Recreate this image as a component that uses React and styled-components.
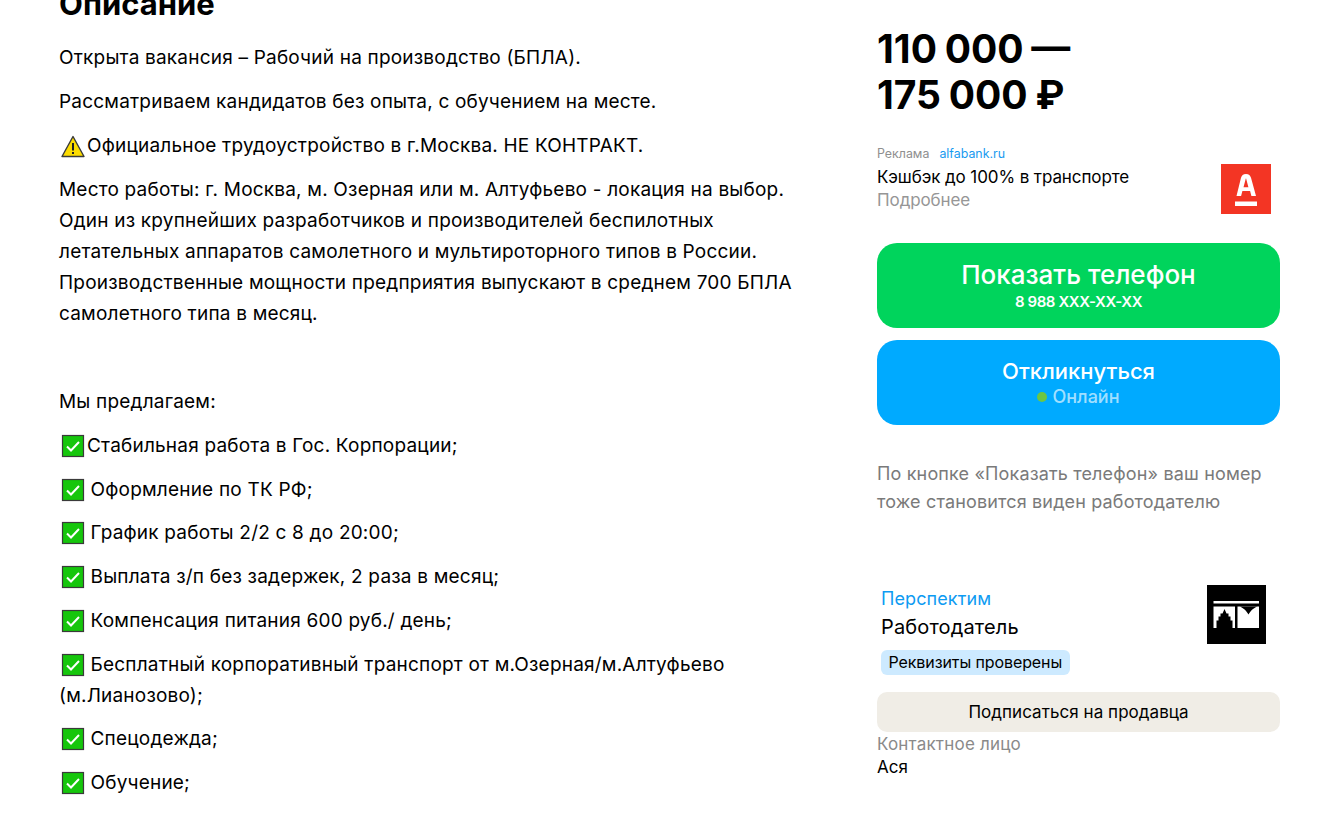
import React from "react";
import styled, { createGlobalStyle } from "styled-components";

const Global = createGlobalStyle`
  html, body { margin: 0; padding: 0; background: #fff; height: 836px; overflow: hidden; }
  body { font-family: Inter, "Noto Sans", "Liberation Sans", sans-serif; color: #000; }
`;

const Page = styled.div`
  display: flex;
  align-items: flex-start;
  margin-top: -14px;
  padding-left: 59px;
  gap: 58px;
`;

const Main = styled.main`
  width: 760px;
  flex: none;
`;

const Heading = styled.h2`
  margin: 0 0 20px;
  font-size: 31px;
  line-height: 36px;
  font-weight: 700;
`;

const Para = styled.p`
  margin: 0 0 ${(p) => p.$after ?? 12.75}px;
  font-size: 19px;
  line-height: 31px;
  letter-spacing: 0.2px;
  white-space: nowrap;
`;

const EmojiBox = styled.svg`
  display: inline-block;
  width: 24px;
  height: 24px;
  vertical-align: -6px;
  margin-left: 2px;
  margin-right: ${(p) => p.$gap}px;
`;

const Check = ({ gap = 0 }) => (
  <EmojiBox $gap={gap} viewBox="0 0 24 24">
    <rect x="1.5" y="1.5" width="21" height="21" fill="#16c60c" stroke="#3a3a3a" strokeWidth="1.2" />
    <path d="M6 12.5l4 4 8-8.5" fill="none" stroke="#fff" strokeWidth="2" />
  </EmojiBox>
);

const Warning = () => (
  <EmojiBox $gap={2} viewBox="0 0 24 24">
    <path d="M12 2.5L23 22.5H1Z" fill="#fcdc00" stroke="#3a3a3a" strokeWidth="1.4" strokeLinejoin="round" />
    <path d="M12 9v7.5" stroke="#222" strokeWidth="2" />
    <rect x="11" y="18" width="2" height="2" fill="#222" />
  </EmojiBox>
);

const Side = styled.aside`
  width: 403px;
  flex: none;
  padding-top: 40px;
`;

const Price = styled.div`
  font-size: 39px;
  line-height: 46px;
  font-weight: 700;
  word-spacing: -1.5px;
  margin-bottom: 28px;
`;

const Ad = styled.div`
  display: flex;
  justify-content: space-between;
  align-items: flex-start;
  padding-right: 9px;
  margin-bottom: 29px;
`;

const AdLabel = styled.div`
  font-size: 12.4px;
  line-height: 16px;
  color: #8f8f8f;
  margin-bottom: 4px;
`;

const AdLink = styled.span`
  color: #1a9bf0;
  margin-left: 10px;
`;

const AdTitle = styled.div`
  font-size: 17px;
  line-height: 23px;
  letter-spacing: -0.1px;
`;

const AdMore = styled(AdTitle)`
  color: #969696;
`;

const AdLogo = styled.svg`
  width: 50px;
  height: 50px;
  display: block;
  margin-top: 18px;
`;

const ActionButton = styled.button`
  display: flex;
  flex-direction: column;
  align-items: center;
  justify-content: center;
  width: 100%;
  height: 85px;
  border: 0;
  padding: 0;
  margin-bottom: 12px;
  border-radius: 20px;
  background: ${(p) => p.$bg};
  color: #fff;
  font-family: inherit;
`;

const ActionTitle = styled.span`
  font-size: ${(p) => p.$size}px;
  line-height: 30px;
  font-weight: 500;
`;

const ActionSub = styled.span`
  margin-top: 2px;
  font-size: 15px;
  line-height: 20px;
  font-weight: 600;
  letter-spacing: -0.4px;
`;

const Online = styled.span`
  display: flex;
  align-items: center;
  gap: 5px;
  padding-bottom: 2px;
  font-size: 18px;
  line-height: 22px;
  font-weight: 500;
  color: rgba(255, 255, 255, 0.65);
`;

const Dot = styled.i`
  width: 10px;
  height: 10px;
  border-radius: 50%;
  background: #6cc644;
`;

const Note = styled.p`
  margin: 35px 0 69px;
  font-size: 18px;
  line-height: 28px;
  letter-spacing: 0.15px;
  color: #7a7a7a;
`;

const Seller = styled.div`
  display: flex;
  justify-content: space-between;
  align-items: flex-start;
  padding: 0 14px 0 4px;
`;

const SellerName = styled.div`
  font-size: 18px;
  line-height: 28px;
  color: #0d9bf2;
  letter-spacing: 0.1px;
`;

const SellerRole = styled.div`
  font-size: 20px;
  line-height: 28px;
  letter-spacing: 0.15px;
`;

const Badge = styled.span`
  display: inline-block;
  margin-top: 9px;
  padding: 0 7.5px;
  font-size: 16px;
  line-height: 25px;
  background: #cdeaff;
  border-radius: 6px;
  letter-spacing: -0.1px;
`;

const SellerLogo = styled.svg`
  width: 59px;
  height: 59px;
  display: block;
`;

const Subscribe = styled.button`
  display: block;
  width: 100%;
  height: 40px;
  margin: 17px 0 0;
  border: 0;
  border-radius: 10px;
  background: #f0ede6;
  color: #000;
  font-family: inherit;
  font-size: 17px;
  letter-spacing: 0.05px;
`;

const ContactLabel = styled.div`
  font-size: 17px;
  line-height: 23px;
  letter-spacing: 0.2px;
  color: #8a8a8a;
  margin-top: 1px;
`;

const ContactName = styled.div`
  font-size: 17px;
  line-height: 23px;
`;

export default function App() {
  return (
    <>
      <Global />
      <Page>
        <Main>
          <Heading>Описание</Heading>
          <Para>Открыта вакансия – Рабочий на производство (БПЛА).</Para>
          <Para>Рассматриваем кандидатов без опыта, с обучением на месте.</Para>
          <Para $after={13.75}><Warning />Официальное трудоустройство в г.Москва. НЕ КОНТРАКТ.</Para>
          <Para>
            Место работы: г. Москва, м. Озерная или м. Алтуфьево - локация на выбор.<br />
            Один из крупнейших разработчиков и производителей беспилотных<br />
            летательных аппаратов самолетного и мультироторного типов в России.<br />
            Производственные мощности предприятия выпускают в среднем 700 БПЛА<br />
            самолетного типа в месяц.
          </Para>
          <Para $after={13}><br /></Para>
          <Para>Мы предлагаем:</Para>
          <Para><Check gap={2} />Стабильная работа в Гос. Корпорации;</Para>
          <Para><Check /> Оформление по ТК РФ;</Para>
          <Para><Check /> График работы 2/2 с 8 до 20:00;</Para>
          <Para><Check /> Выплата з/п без задержек, 2 раза в месяц;</Para>
          <Para><Check /> Компенсация питания 600 руб./ день;</Para>
          <Para><Check /> Бесплатный корпоративный транспорт от м.Озерная/м.Алтуфьево<br />(м.Лианозово);</Para>
          <Para><Check /> Спецодежда;</Para>
          <Para><Check /> Обучение;</Para>
        </Main>
        <Side>
          <Price>110 000 —<br />175 000 ₽</Price>
          <Ad>
            <div>
              <AdLabel>Реклама<AdLink>alfabank.ru</AdLink></AdLabel>
              <AdTitle>Кэшбэк до 100% в транспорте</AdTitle>
              <AdMore>Подробнее</AdMore>
            </div>
            <AdLogo viewBox="0 0 50 50">
              <rect width="50" height="50" fill="#f33524" />
              <path d="M25 10c-3 0-4.200 1.500-5 3.800L15.500 32h4.600l1.300-5h7.700l1.300 5h4.600L30 13.800C29.200 11.500 28 10 25 10Zm-2.500 13.200 2.300-8.700h.3l2.300 8.700Z" fill="#fff" fillRule="evenodd" />
              <rect x="14" y="37.500" width="22" height="4.500" fill="#fff" />
            </AdLogo>
          </Ad>
          <ActionButton $bg="#00d45c">
            <ActionTitle $size={26}>Показать телефон</ActionTitle>
            <ActionSub>8 988 XXX-XX-XX</ActionSub>
          </ActionButton>
          <ActionButton $bg="#00aaff">
            <ActionTitle $size={22}>Откликнуться</ActionTitle>
            <Online><Dot />Онлайн</Online>
          </ActionButton>
          <Note>По кнопке «Показать телефон» ваш номер<br />тоже становится виден работодателю</Note>
          <Seller>
            <div>
              <SellerName>Перспектим</SellerName>
              <SellerRole>Работодатель</SellerRole>
              <Badge>Реквизиты проверены</Badge>
            </div>
            <SellerLogo viewBox="0 0 59 59">
              <rect width="59" height="59" fill="#000" />
              <rect x="6.500" y="16" width="45.500" height="2.500" fill="#fff" />
              <rect x="6.500" y="21.500" width="21.500" height="21.500" fill="#fff" />
              <path d="M9.500 43v-7.500h2v-4h2v-3h2l2-4.500 2 4.500h2v3h2v4h2V43Z" fill="#000" />
              <rect x="30.500" y="21.500" width="21.500" height="21.500" fill="#fff" />
              <path d="M33 21.500c3.500 2 6 3.500 8.500 8 2.500-4.500 5-6 8.500-8Z" fill="#000" />
            </SellerLogo>
          </Seller>
          <Subscribe>Подписаться на продавца</Subscribe>
          <ContactLabel>Контактное лицо</ContactLabel>
          <ContactName>Ася</ContactName>
        </Side>
      </Page>
    </>
  );
}
